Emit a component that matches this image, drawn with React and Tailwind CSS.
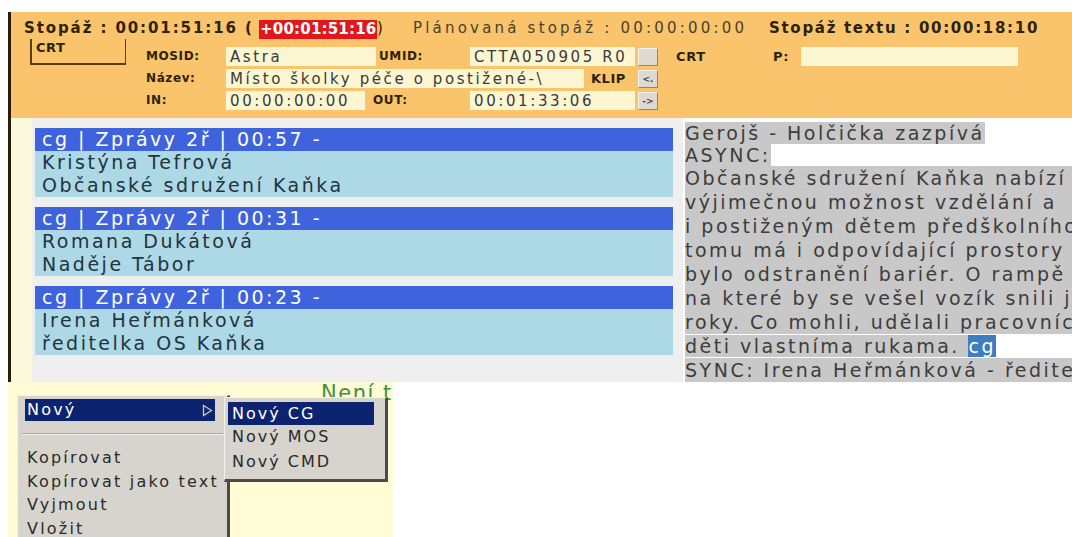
import React from "react";

const cards = [
  { head: "cg | Zprávy 2ř | 00:57 -", lines: ["Kristýna Tefrová", "Občanské sdružení Kaňka"] },
  { head: "cg | Zprávy 2ř | 00:31 -", lines: ["Romana Dukátová", "Naděje Tábor"] },
  { head: "cg | Zprávy 2ř | 00:23 -", lines: ["Irena Heřmánková", "ředitelka OS Kaňka"] },
];

const story = [
  "Občanské sdružení Kaňka nabízí",
  "výjimečnou možnost vzdělání a",
  "i postiženým dětem předškolního",
  "tomu má i odpovídající prostory",
  "bylo odstranění bariér. O rampě",
  "na které by se vešel vozík snili již",
  "roky. Co mohli, udělali pracovníci",
];

const font = { fontFamily: '"DejaVu Sans", Verdana, sans-serif' };

function Field({ w, children }) {
  return (
    <div className={`${w} h-[19px] bg-[#fcf6d2] overflow-hidden whitespace-nowrap pl-[4px] text-[15px] leading-[21px] tracking-[2.6px] text-[#3a3a3a]`}>
      {children}
    </div>
  );
}

function SmallBtn({ children }) {
  return (
    <div className="ml-[3px] w-[20px] h-[18px] bg-[#dedad2] border-t border-l border-[#f4f2ee] border-r border-b border-r-[#8a877f] border-b-[#8a877f] text-[9px] leading-[16px] text-center text-[#444] font-bold">
      {children}
    </div>
  );
}

function Label({ w, children, className = "" }) {
  return (
    <div className={`${w} text-[12px] font-bold leading-[19px] tracking-[0.6px] text-[#2d2208] ${className}`}>
      {children}
    </div>
  );
}

export default function App() {
  return (
    <div className="w-[1072px] h-[537px] bg-white overflow-hidden pt-[12px]" style={font}>
      <div className="ml-[8px] border-l-[3px] border-[#2a1e08]">
        {/* header */}
        <div className="bg-[#f9c46b] h-[106px]">
          <div className="flex h-[27px] items-end pl-[13px] text-[15px] whitespace-nowrap">
            <span className="w-[235px] font-bold tracking-[1.9px] text-[#2d2208]">Stopáž : 00:01:51:16 (</span>
            <span className="w-[118px] font-bold tracking-[0.2px] text-white bg-[#e3161e] leading-[19px] pl-[1px]">+00:01:51:16</span>
            <span className="w-[36px] text-[#2d2208]">)</span>
            <span className="w-[356px] tracking-[3.2px] text-[#4a4030]">Plánovaná stopáž : 00:00:00:00</span>
            <span className="font-bold tracking-[1.7px] text-[#2d2208]">Stopáž textu : 00:00:18:10</span>
          </div>
          <div className="flex">
            <div className="w-[19px]" />
            <div className="w-[116px]">
              <div className="w-[96px] h-[26px] border-l-2 border-b-2 border-r border-[#5a3f0c] pl-[4px] text-[13px] font-bold leading-[18px] tracking-[0.5px] text-[#2d2208]">
                CRT
              </div>
            </div>
            <div className="flex flex-col gap-[3px] pt-[8px]">
              <div className="flex items-center">
                <Label w="w-[80px]">MOSID:</Label>
                <Field w="w-[150px]">Astra</Field>
                <Label w="w-[94px]" className="pl-[3px]">UMID:</Label>
                <Field w="w-[165px]">CTTA050905 R0</Field>
                <SmallBtn />
                <Label w="w-[115px]" className="pl-[18px] text-[13px]">CRT</Label>
                <Label w="w-[28px]" className="text-[13px]">P:</Label>
                <div className="w-[217px] h-[19px] bg-[#fcf6d2]" />
              </div>
              <div className="flex items-center">
                <Label w="w-[80px]">Název:</Label>
                <Field w="w-[358px]">Místo školky péče o postižené-\</Field>
                <Label w="w-[42px]" className="text-right text-[13px] tracking-[0.3px]">KLIP</Label>
                <div className="w-[9px]" />
                <SmallBtn>&lt;.</SmallBtn>
              </div>
              <div className="flex items-center">
                <Label w="w-[80px]">IN:</Label>
                <Field w="w-[139px]">00:00:00:00</Field>
                <Label w="w-[105px]" className="pl-[8px]">OUT:</Label>
                <Field w="w-[165px]">00:01:33:06</Field>
                <SmallBtn>-&gt;</SmallBtn>
              </div>
            </div>
          </div>
        </div>

        {/* rundown body */}
        <div className="flex h-[264px]">
          <div className="w-[21px] bg-[#fdf9dc]" />
          <div className="w-[651px] bg-[#efefef] pt-[10px] pl-[3px] flex flex-col gap-[10px]">
            {cards.map((c) => (
              <div key={c.head} className="w-[638px] text-[19px] leading-[23px] tracking-[2.5px] whitespace-nowrap">
                <div className="bg-[#3f63dc] text-white pl-[7px]">{c.head}</div>
                <div className="bg-[#add8e6] text-[#22343e] pl-[7px]">
                  {c.lines.map((l) => (
                    <div key={l}>{l}</div>
                  ))}
                </div>
              </div>
            ))}
          </div>
          <div className="flex-1 bg-white overflow-hidden pt-[4px] pl-[2px] text-[19px] leading-[24px] tracking-[2.5px] text-[#3c3c3c] whitespace-nowrap">
            <div className="leading-[22px]"><span className="bg-[#c8c8c8]">Gerojš - Holčička zazpívá</span></div>
            <div className="leading-[22px]"><span className="bg-[#c8c8c8]">ASYNC:</span></div>
            {story.map((l) => (
              <div key={l} className="bg-[#c8c8c8]">{l}</div>
            ))}
            <div>
              <span className="bg-[#c8c8c8]">děti vlastníma rukama. </span>
              <span className="bg-[#3e7dc2] text-white">cg</span>
            </div>
            <div className="bg-[#c8c8c8]">SYNC: Irena Heřmánková - ředitelka OS Kaňka</div>
          </div>
        </div>
      </div>

      {/* lower area with context menu */}
      <div className="relative flex h-[155px]">
        <div className="ml-[8px] w-[385px] bg-[#fffcd6] relative overflow-hidden">
          <div className="absolute left-[313px] top-[-4px] text-[21px] tracking-[1.5px] text-[#3f8f3f] whitespace-nowrap">Není t</div>
        </div>

        <div className="absolute left-[17px] top-[13px] w-[213px] h-[160px] bg-[#d7d4ce] border-t border-l border-[#f2f1ee] border-r-[3px] border-r-[#4a4a4a] pt-[3px] text-[16px] tracking-[2.2px] text-[#2a2a2a]">
          <div className="ml-[7px] mr-[12px] h-[22px] bg-[#0c2470] text-white flex items-center justify-between pl-[2px] pr-[2px]">
            <span>Nový</span>
            <svg width="11" height="13" viewBox="0 0 11 13">
              <path d="M1.5 1.5 L9.5 6.5 L1.5 11.5 Z" fill="none" stroke="#c8c8c8" strokeWidth="1.3" />
            </svg>
          </div>
          <div className="h-[25px] flex items-center px-[4px]">
            <div className="w-full border-t border-[#a8a59f] border-b border-b-[#f5f4f0]" />
          </div>
          <div className="pl-[9px] leading-[23.5px]">
            <div>Kopírovat</div>
            <div>Kopírovat jako text</div>
            <div>Vyjmout</div>
            <div>Vložit</div>
          </div>
        </div>

        <div className="absolute left-[224px] top-[15px] w-[164px] h-[85px] bg-[#d7d4ce] border-t border-l border-[#f2f1ee] border-r-[3px] border-b-[3px] border-r-[#4a4a4a] border-b-[#4a4a4a] pt-[4px] text-[16px] tracking-[2px] text-[#2a2a2a]">
          <div className="ml-[3px] mr-[11px] h-[23px] bg-[#0c2470] text-white leading-[23px] pl-[4px]">Nový CG</div>
          <div className="pl-[7px] leading-[24.5px]">
            <div>Nový MOS</div>
            <div>Nový CMD</div>
          </div>
        </div>
      </div>
    </div>
  );
}
